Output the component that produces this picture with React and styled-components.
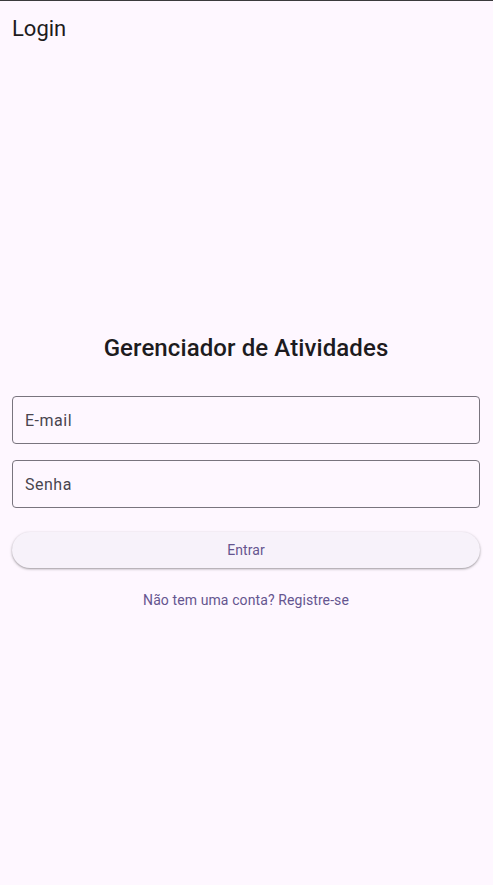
import React from "react";
import styled, { createGlobalStyle } from "styled-components";

const Global = createGlobalStyle`
  html, body { margin: 0; padding: 0; background: #fef7ff; }
  body { font-family: Roboto, "Noto Sans", sans-serif; }
  * { box-sizing: border-box; }
`;

const Page = styled.div`
  min-height: 885px;
  display: flex;
  flex-direction: column;
  background: #fef7ff;
  border-top: 1px solid #3b3b3d;
`;

const AppBar = styled.header`
  height: 56px;
  display: flex;
  align-items: center;
  padding: 0 12px 2px;
  font-size: 22px;
  color: #1d1b20;
`;

const Body = styled.main`
  flex: 1;
  display: flex;
  flex-direction: column;
  justify-content: center;
  padding: 10px 13px 0 12px;
`;

const Title = styled.h1`
  margin: 0 0 32px;
  font-size: 24px;
  line-height: 32px;
  font-weight: 500;
  letter-spacing: 0.1px;
  text-align: center;
  color: #1d1b20;
`;

const Field = styled.label`
  display: flex;
  align-items: center;
  height: 48px;
  margin-bottom: ${(p) => p.$gap}px;
  padding: 0 12px;
  border: 1px solid #79747e;
  border-radius: 4px;
  font-size: 16px;
  letter-spacing: 0.5px;
  color: #49454f;
`;

const Button = styled.button`
  height: 36px;
  border: none;
  border-radius: 18px;
  background: #f7f2fa;
  color: #65558f;
  font-family: inherit;
  font-size: 14px;
  letter-spacing: 0.1px;
  box-shadow: 0 1px 2px rgba(0, 0, 0, 0.3), 0 1px 3px 1px rgba(0, 0, 0, 0.08);
`;

const LinkButton = styled.button`
  height: 40px;
  margin-top: 12px;
  align-self: center;
  padding: 0 12px;
  border: none;
  background: transparent;
  color: #65558f;
  font-family: inherit;
  font-size: 14px;
  letter-spacing: 0.1px;
`;

export default function App() {
  return (
    <>
      <Global />
      <Page>
        <AppBar>Login</AppBar>
        <Body>
          <Title>Gerenciador de Atividades</Title>
          <Field $gap={16}>E-mail</Field>
          <Field $gap={24}>Senha</Field>
          <Button>Entrar</Button>
          <LinkButton>Não tem uma conta? Registre-se</LinkButton>
        </Body>
      </Page>
    </>
  );
}
